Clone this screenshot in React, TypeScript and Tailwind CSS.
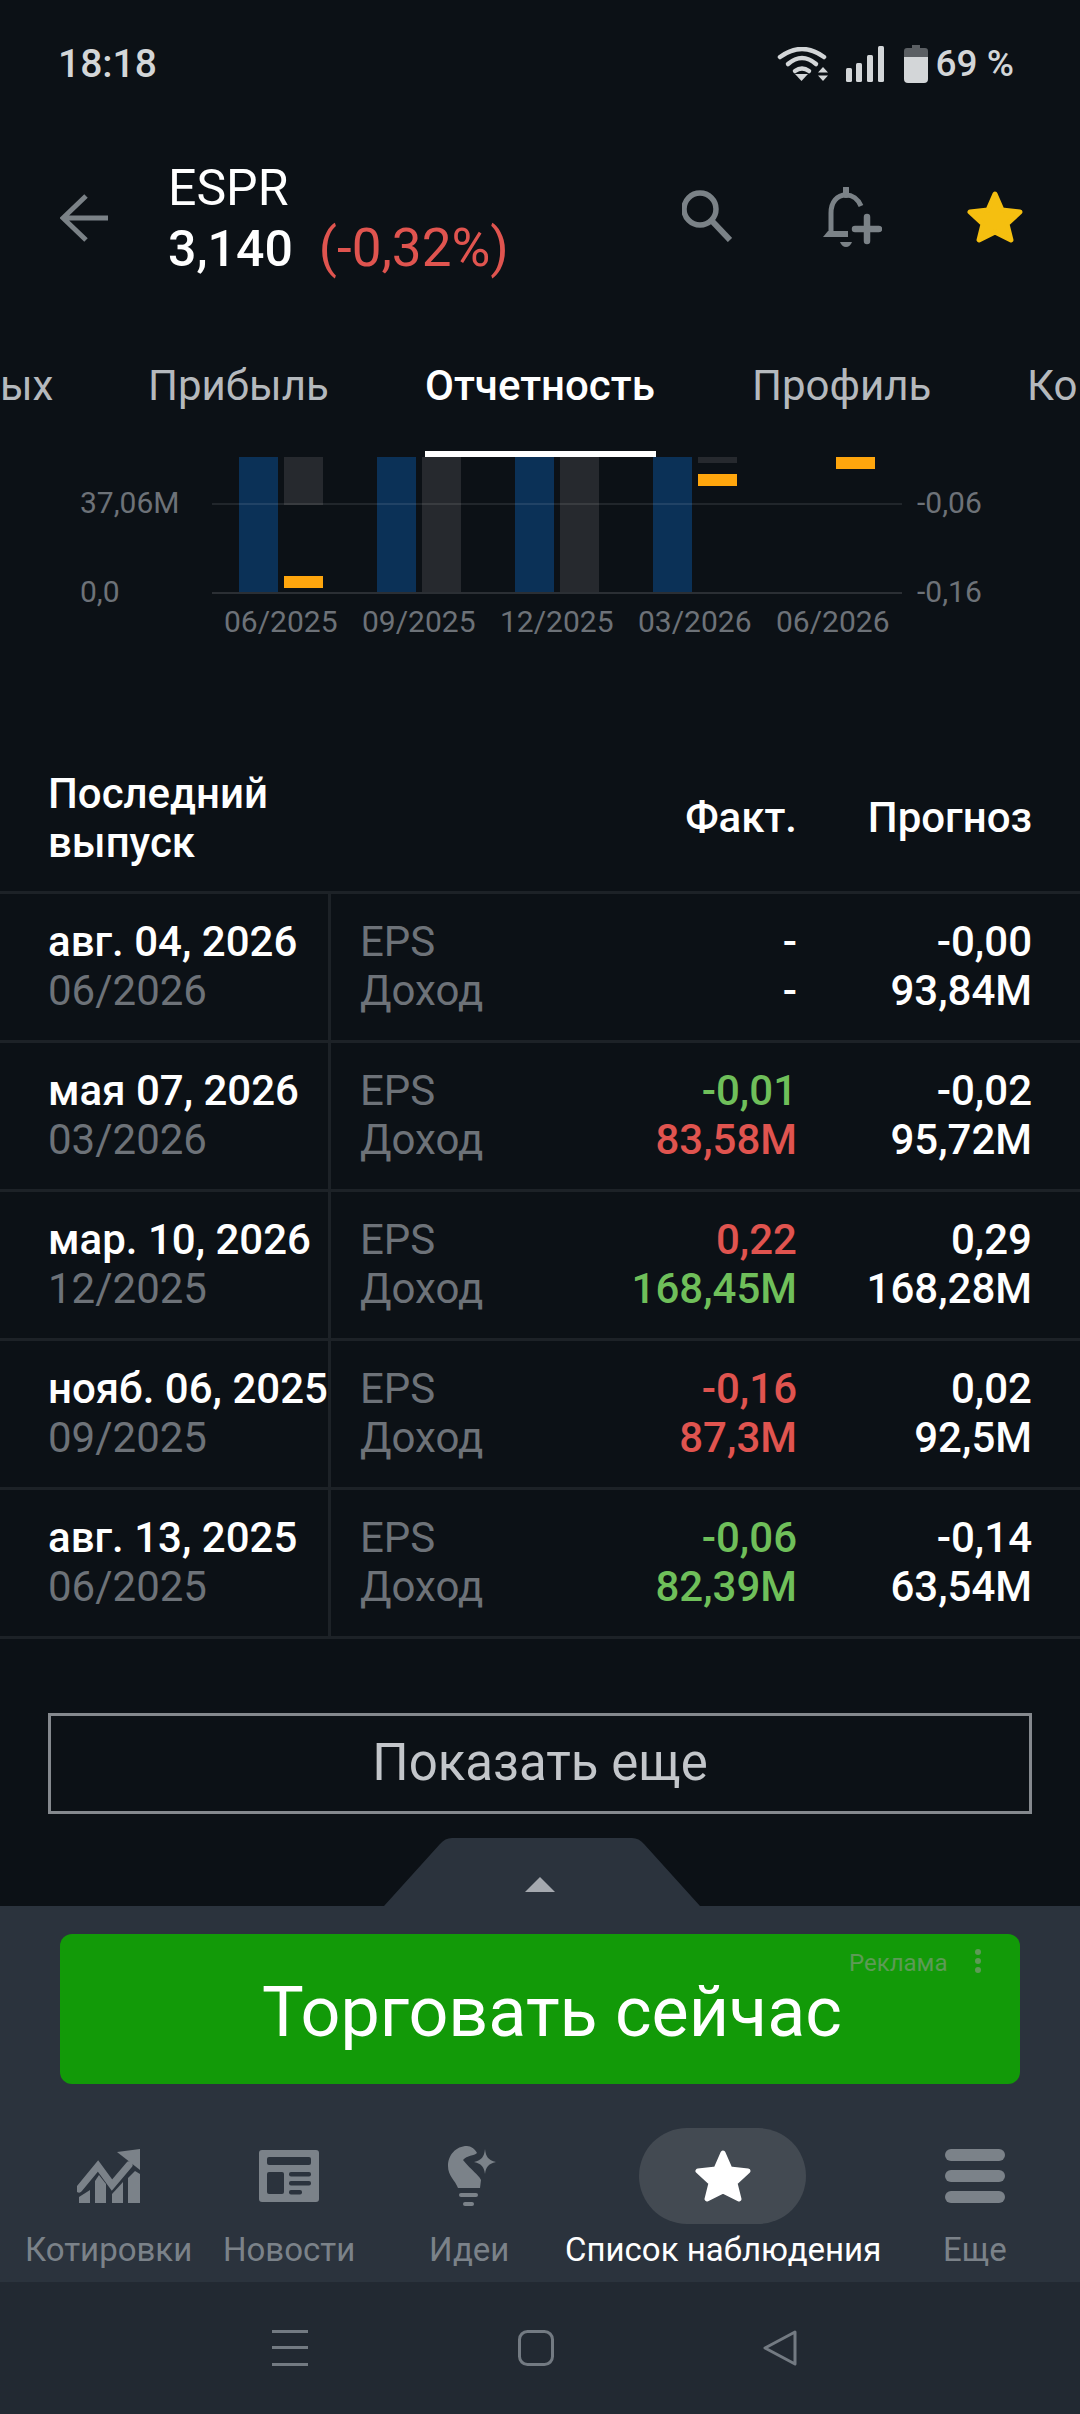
const rows = [
  { date: "авг. 04, 2026", period: "06/2026", eps: "-", epsTone: "text-white", rev: "-", revTone: "text-white", epsF: "-0,00", revF: "93,84M" },
  { date: "мая 07, 2026", period: "03/2026", eps: "-0,01", epsTone: "text-[#6fbf5a]", rev: "83,58M", revTone: "text-[#e0544f]", epsF: "-0,02", revF: "95,72M" },
  { date: "мар. 10, 2026", period: "12/2025", eps: "0,22", epsTone: "text-[#e0544f]", rev: "168,45M", revTone: "text-[#6fbf5a]", epsF: "0,29", revF: "168,28M" },
  { date: "нояб. 06, 2025", period: "09/2025", eps: "-0,16", epsTone: "text-[#e0544f]", rev: "87,3M", revTone: "text-[#e0544f]", epsF: "0,02", revF: "92,5M" },
  { date: "авг. 13, 2025", period: "06/2025", eps: "-0,06", epsTone: "text-[#6fbf5a]", rev: "82,39M", revTone: "text-[#6fbf5a]", epsF: "-0,14", revF: "63,54M" },
];

const STAR = "28,3 35,19 53,21 40,33 44,49 28,41 12,49 16,33 3,21 21,19";

function Star({ color, className }: { color: string; className: string }) {
  return (
    <svg viewBox="0 0 56 52" className={className}>
      <polygon points={STAR} fill={color} stroke={color} strokeWidth="5" strokeLinejoin="round" />
    </svg>
  );
}

function Chart() {
  const blue = [239, 377, 515, 653];
  return (
    <svg viewBox="0 0 1080 200" className="w-full h-[200px] block">
      {blue.map((x) => (
        <rect key={x} x={x} y="0" width="39" height="136" fill="#0b3157" />
      ))}
      <rect x="284" y="0" width="39" height="48" fill="#26292e" />
      <rect x="422" y="0" width="39" height="136" fill="#26292e" />
      <rect x="560" y="0" width="39" height="136" fill="#26292e" />
      <rect x="698" y="0" width="39" height="6" fill="#26292e" />
      <rect x="284" y="119" width="39" height="12" fill="#ffa60d" />
      <rect x="698" y="17" width="39" height="12" fill="#ffa60d" />
      <rect x="836" y="0" width="39" height="12" fill="#ffa60d" />
      <line x1="212" x2="902" y1="47" y2="47" stroke="#ffffff" strokeOpacity="0.12" strokeWidth="1.5" />
      <line x1="212" x2="902" y1="136" y2="136" stroke="#2b2f34" strokeWidth="2" />
      <g fontFamily="Roboto, sans-serif" fontSize="30" fill="#6d7278">
        <text x="80" y="56">37,06M</text>
        <text x="80" y="145">0,0</text>
        <text x="917" y="56">-0,06</text>
        <text x="917" y="145">-0,16</text>
        <text x="224" y="175">06/2025</text>
        <text x="362" y="175">09/2025</text>
        <text x="500" y="175">12/2025</text>
        <text x="638" y="175">03/2026</text>
        <text x="776" y="175">06/2026</text>
      </g>
    </svg>
  );
}

export default function App() {
  return (
    <div className="relative w-[1080px] h-[2414px] overflow-hidden bg-[#0c1116] flex flex-col font-['Roboto',sans-serif]">
      {/* status bar */}
      <div className="h-[126px] shrink-0 flex items-center justify-between pl-[58px] pr-[66px] pt-[2px] text-[#d3d6d8] font-medium text-[39px]">
        <span>18:18</span>
        <div className="flex items-center">
          <svg viewBox="0 0 51 34" className="w-[51px] h-[34px] mr-[18px]">
            <g fill="none" stroke="#d3d6d8" strokeWidth="4.5" strokeLinecap="round">
              <path d="M3 10 Q25 -6 47 10" />
              <path d="M11 17 Q25 5 39 17" />
              <path d="M18 24 Q25 19 32 24" />
            </g>
            <path d="M18 27 L31 27 L24.5 34 Z" fill="#d3d6d8" />
            <path d="M46 20 L51 25.5 L41 25.5 Z M41 28.5 L51 28.5 L46 34 Z" fill="#d3d6d8" />
          </svg>
          <svg viewBox="0 0 38 36" className="w-[38px] h-[36px] mr-[20px]">
            <g fill="#d3d6d8">
              <rect x="0" y="22" width="6" height="14" rx="1.5" />
              <rect x="10" y="17" width="6" height="19" rx="1.5" />
              <rect x="21" y="9" width="6" height="27" rx="1.5" />
              <rect x="32" y="0" width="6" height="36" rx="1.5" />
            </g>
          </svg>
          <svg viewBox="0 0 24 38" className="w-[24px] h-[38px] mr-[8px]">
            <path d="M8 0 H16 V3 H21 Q24 3 24 6 V12 H0 V6 Q0 3 3 3 H8 Z" fill="#5b5f63" />
            <path d="M0 12 H24 V34 Q24 38 20 38 H4 Q0 38 0 34 Z" fill="#d3d6d8" />
          </svg>
          <span className="text-[37px]">69 %</span>
        </div>
      </div>

      {/* toolbar */}
      <div className="h-[214px] shrink-0 flex items-start pl-[60px]">
        <svg viewBox="0 0 48 48" className="w-[48px] h-[48px] mt-[68px] mr-[60px]" fill="none" stroke="#7b8287" strokeWidth="5">
          <path d="M26 2 L3 24 L26 46 M3 24 H48" />
        </svg>
        <div className="flex flex-col text-white mt-[33px]">
          <span className="text-[50px] leading-[58px]">ESPR</span>
          <div className="flex items-baseline text-[50px] leading-[62px] font-medium">
            <span>3,140</span>
            <span className="ml-[26px] text-[53px] font-normal text-[#e0544f]">(-0,32%)</span>
          </div>
        </div>
        <svg viewBox="0 0 50 52" className="absolute left-[682px] top-[190px] w-[50px] h-[52px]" fill="none" stroke="#7b8287" strokeWidth="5.5">
          <circle cx="18" cy="19" r="16" />
          <path d="M30 31 L48 50" strokeWidth="6" />
        </svg>
        <svg viewBox="0 0 60 60" className="absolute left-[822px] top-[187px] w-[60px] h-[60px]" fill="none" stroke="#7b8287" strokeWidth="5">
          <path d="M9 46 V26 C9 15 15 8 24 8 C30 8 36 12 39 19" />
          <path d="M1 50 L6 44 H26 V50 Z" fill="#7b8287" stroke="none" />
          <path d="M24 1 V8" strokeWidth="6" strokeLinecap="round" />
          <path d="M18 55 H30 Q28 60 24 60 Q20 60 18 55 Z" fill="#7b8287" stroke="none" />
          <path d="M33 42 H57 M45 30 V54" strokeWidth="6.5" strokeLinecap="round" />
        </svg>
        <Star color="#f5bf10" className="absolute left-[967px] top-[191px] w-[56px] h-[52px]" />
      </div>

      {/* tabs */}
      <div className="h-[117px] shrink-0 relative overflow-hidden text-[42px] text-[#b5b9bd] whitespace-nowrap">
        <div className="flex items-center h-[90px]">
          <span className="-ml-px w-[149px] pl-px">ых</span>
          <span className="w-[277px]">Прибыль</span>
          <span className="w-[327px] text-white font-medium">Отчетность</span>
          <span className="w-[275px]">Профиль</span>
          <span>Ко</span>
        </div>
        <div className="absolute left-[425px] bottom-0 w-[231px] h-[6px] bg-white" />
      </div>

      <Chart />

      {/* earnings table */}
      <div className="mt-[75px] h-[159px] shrink-0 flex items-center justify-between pl-[48px] pr-[48px] pt-[12px] text-[42px] font-medium text-white leading-[49px]">
        <div className="w-[300px]">Последний выпуск</div>
        <div className="flex items-center">
          <span className="w-[200px] text-right">Факт.</span>
          <span className="ml-[35px] w-[200px] text-right">Прогноз</span>
        </div>
      </div>
      <div className="border-t-[3px] border-[#1d2227]">
        {rows.map((r) => (
          <div key={r.date} className="h-[149px] flex border-b-[3px] border-[#1d2227] text-[42px] leading-[49px]">
            <div className="w-[331px] border-r-[3px] border-[#1d2227] pl-[48px] pb-[2px] flex flex-col justify-center whitespace-nowrap">
              <span className="text-white font-medium">{r.date}</span>
              <span className="text-[#6d7278]">{r.period}</span>
            </div>
            <div className="w-[150px] pl-[29px] pb-[2px] flex flex-col justify-center text-[#6d7278]">
              <span>EPS</span>
              <span>Доход</span>
            </div>
            <div className="w-[316px] pb-[2px] flex flex-col justify-center items-end font-medium">
              <span className={r.epsTone}>{r.eps}</span>
              <span className={r.revTone}>{r.rev}</span>
            </div>
            <div className="w-[235px] pb-[2px] flex flex-col justify-center items-end font-medium text-white">
              <span>{r.epsF}</span>
              <span>{r.revF}</span>
            </div>
          </div>
        ))}
      </div>

      <button className="mt-[74px] mx-[48px] h-[101px] shrink-0 border-[3px] border-[#85898e] text-[51px] text-[#c3c6ca]">
        Показать еще
      </button>

      {/* bottom sheet */}
      <div className="mt-[92px] flex-1 flex flex-col bg-[#2b333d] relative">
        <svg viewBox="0 0 316 68" className="absolute left-[384px] -top-[68px] w-[316px] h-[68px]">
          <path d="M0 68 L56 6 Q61 0 68 0 H248 Q255 0 260 6 L316 68 Z" fill="#2b333d" />
          <path d="M141 54 L156 39 L171 54 Z" fill="#a5a9af" />
        </svg>
        <div className="relative mt-[28px] mx-[60px] h-[150px] rounded-[12px] bg-[#129a08] flex items-center justify-center pb-[2px] pl-[24px]">
          <span className="text-[70px] text-white pt-[8px]">Торговать сейчас</span>
          <span className="absolute left-[789px] top-[11px] text-[24px] text-[#5d9a56]">Реклама</span>
          <svg viewBox="0 0 8 24" className="absolute left-[914px] top-[15px] w-[8px] h-[24px]" fill="#5d9a56">
            <circle cx="4" cy="3" r="3" />
            <circle cx="4" cy="12" r="3" />
            <circle cx="4" cy="21" r="3" />
          </svg>
        </div>

        <div className="flex-1 relative text-[#7b8289] text-[33px]">
          <div className="absolute left-[639px] top-[44px] w-[167px] h-[96px] rounded-[48px] bg-[#434a52]" />
          <Star color="#ffffff" className="absolute left-[695px] top-[66px] w-[56px] h-[52px]" />
          <svg viewBox="0 0 64 54" className="absolute left-[77px] top-[65px] w-[64px] h-[54px]" fill="#7b8289">
            <path d="M2 40 L21 17 L35 36 L52 16" fill="none" stroke="#7b8289" strokeWidth="7" strokeLinecap="round" strokeLinejoin="miter" />
            <path d="M40 3 L63 0 L63 21 Z" />
            <path d="M2 48 L13 41 V54 H2 Z" />
            <path d="M18 32 L22 26 L29 35 V54 H18 Z" />
            <path d="M35 45 L46 33 V54 H35 Z" />
            <path d="M51 29 L58 22 L63 25 V54 H51 Z" />
          </svg>
          <svg viewBox="0 0 62 52" className="absolute left-[258px] top-[66px] w-[62px] h-[52px]">
            <rect x="1" width="60" height="52" rx="3" fill="#7b8289" />
            <rect x="9" y="7" width="44" height="8" rx="2" fill="#2b333d" />
            <rect x="9" y="22" width="17" height="22" rx="2" fill="#2b333d" />
            <rect x="31" y="22" width="22" height="4.5" rx="2" fill="#2b333d" />
            <rect x="31" y="31" width="22" height="4.5" rx="2" fill="#2b333d" />
            <rect x="31" y="40" width="13" height="4.5" rx="2" fill="#2b333d" />
          </svg>
          <svg viewBox="0 0 48 60" className="absolute left-[448px] top-[62px] w-[48px] h-[60px]" fill="#7b8289">
            <path d="M19 0 C8 0 0 9 0 20 C0 30 7 34 10 42 H32 L33 34 C30 28 24 25 15 14 C19 9 26 10 29 7 C27 3 23 0 19 0 Z" />
            <path d="M37 3 C38 11 40 14 48 16 C40 18 38 21 37 28 C36 21 34 18 26 16 C34 14 36 11 37 3 Z" />
            <rect x="11" y="47" width="19" height="4" rx="2" />
            <rect x="15" y="56" width="11" height="4" rx="2" />
          </svg>
          <div className="absolute left-[945px] top-[65px] w-[60px] flex flex-col gap-[9px]">
            <div className="h-[12px] rounded-[6px] bg-[#7b8289]" />
            <div className="h-[12px] rounded-[6px] bg-[#7b8289]" />
            <div className="h-[12px] rounded-[6px] bg-[#7b8289]" />
          </div>
          <div className="absolute top-[144px] left-0 w-full h-[44px] leading-[44px] whitespace-nowrap">
            <span className="absolute left-[25px]">Котировки</span>
            <span className="absolute left-[223px]">Новости</span>
            <span className="absolute left-[429px]">Идеи</span>
            <span className="absolute left-[565px] text-white">Список наблюдения</span>
            <span className="absolute left-[943px]">Еще</span>
          </div>
        </div>

        <div className="h-[132px] shrink-0 bg-[#222932] flex items-center">
          <svg viewBox="0 0 36 36" className="ml-[272px] w-[36px] h-[36px]" fill="#737a82">
            <rect y="0" width="36" height="3" />
            <rect y="16" width="36" height="3" />
            <rect y="33" width="36" height="3" />
          </svg>
          <svg viewBox="0 0 36 36" className="ml-[210px] w-[36px] h-[36px]" fill="none" stroke="#737a82" strokeWidth="3">
            <rect x="1.5" y="1.5" width="33" height="33" rx="8" />
          </svg>
          <svg viewBox="0 0 36 36" className="ml-[208px] w-[36px] h-[36px]" fill="none" stroke="#737a82" strokeWidth="3" strokeLinejoin="round">
            <path d="M33 2 L3 18 L33 34 Z" />
          </svg>
        </div>
      </div>
    </div>
  );
}
